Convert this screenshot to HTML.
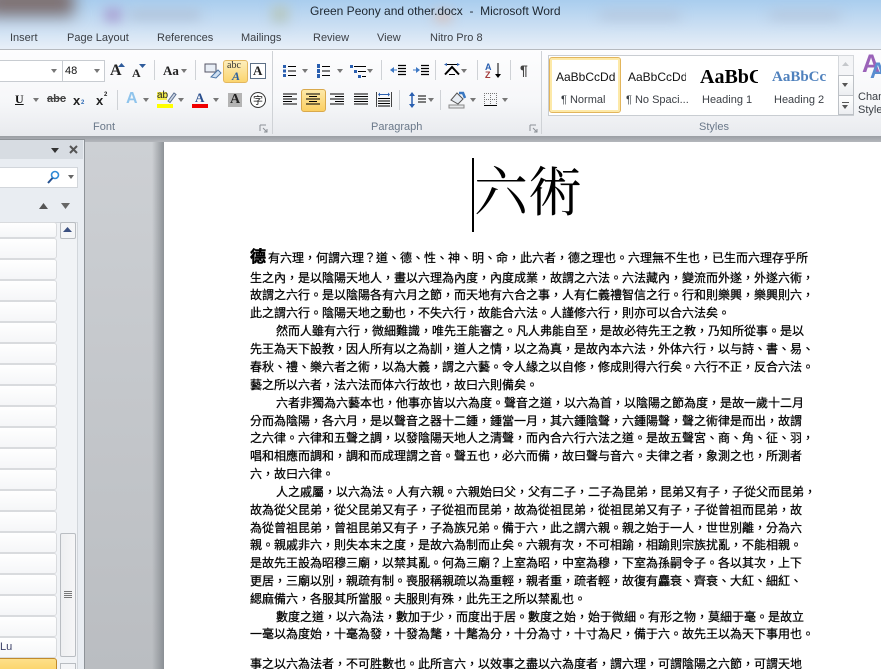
<!DOCTYPE html>
<html style="overflow:hidden;height:669px"><head><meta charset="utf-8"><style>
html,body{margin:0;padding:0}
body{width:881px;height:669px;overflow:hidden;background:#b9bcc1;font-family:"Liberation Sans",sans-serif;color:#222}
#w{position:absolute;left:0;top:0;width:881px;height:669px;overflow:hidden;contain:paint}
.a{position:absolute}
.t{position:absolute;white-space:nowrap;font-size:11px;color:#3c4046}
.dd{position:absolute;width:0;height:0;border-left:3.5px solid transparent;border-right:3.5px solid transparent;border-top:4px solid #777}
.sep{position:absolute;width:1px;background:#cfd2d6}
.blot{position:absolute;filter:blur(6px)}
.l{position:absolute;white-space:nowrap;font-family:"WenQuanYi Zen Hei","Noto Sans CJK TC",sans-serif;font-size:12px;line-height:18px;color:#000;left:250px;-webkit-text-stroke:.25px #000}
.it{position:absolute;left:-4px;width:59px;height:19px;background:linear-gradient(#fff,#f5f6f8);border:1px solid #d9dbde;border-radius:3px}
svg{position:absolute;overflow:visible}
</style></head><body><div id="w">
<!-- title bar -->
<div class="a" style="left:0;top:0;width:881px;height:50px;background:linear-gradient(#a9cdee,#c6dcf2 45%,#e9f0f8)"></div>
<div class="blot" style="left:-14px;top:-12px;width:88px;height:28px;background:#7d6f70;filter:blur(8px)"></div>
<div class="blot" style="left:105px;top:9px;width:16px;height:12px;background:#a596cc"></div>
<div class="blot" style="left:130px;top:12px;width:70px;height:6px;background:#a9b6cb"></div>
<div class="blot" style="left:272px;top:6px;width:16px;height:16px;background:#b6c6bd"></div>
<div class="blot" style="left:435px;top:12px;width:16px;height:9px;background:#dcbdb2"></div>
<div class="blot" style="left:600px;top:13px;width:80px;height:5px;background:#aebbd0"></div>
<div class="blot" style="left:770px;top:13px;width:70px;height:5px;background:#aebbd0"></div>
<div class="t" style="left:310px;top:4px;font-size:12px;color:#1e2730">Green Peony and other.docx &nbsp;-&nbsp; Microsoft Word</div>
<div class="t" style="left:10px;top:32px">Insert</div>
<div class="t" style="left:67px;top:32px">Page Layout</div>
<div class="t" style="left:157px;top:32px">References</div>
<div class="t" style="left:241px;top:32px">Mailings</div>
<div class="t" style="left:313px;top:32px">Review</div>
<div class="t" style="left:377px;top:32px">View</div>
<div class="t" style="left:430px;top:32px">Nitro Pro 8</div>
<!-- ribbon -->
<div class="a" style="left:0;top:49px;width:881px;height:86px;background:linear-gradient(#fdfdfe,#f6f7f9 60%,#e8eaee);border-top:1px solid #b6babf;border-bottom:1px solid #8f9398"></div>
<div class="a" style="left:0;top:136px;width:881px;height:6px;background:linear-gradient(#9a9ea3,#b4b7bc)"></div>
<div class="sep" style="left:272px;top:51px;height:83px"></div>
<div class="sep" style="left:541px;top:51px;height:83px"></div>
<div class="t" style="left:93px;top:121px;color:#6a7889">Font</div>
<div class="t" style="left:371px;top:121px;color:#6a7889">Paragraph</div>
<div class="t" style="left:699px;top:121px;color:#6a7889">Styles</div>
<svg style="left:259px;top:124px" width="9" height="9"><path d="M1 1h6M1 1v6M4 4l4 4M8 5v3H5" stroke="#8b9096" fill="none"/></svg>
<svg style="left:529px;top:124px" width="9" height="9"><path d="M1 1h6M1 1v6M4 4l4 4M8 5v3H5" stroke="#8b9096" fill="none"/></svg>
<!-- font row 1 -->
<div class="a" style="left:-2px;top:60px;width:63px;height:20px;background:#fff;border:1px solid #c8ccd1"></div>
<div class="a" style="left:62px;top:60px;width:41px;height:20px;background:#fff;border:1px solid #c8ccd1"></div>
<div class="dd" style="left:51px;top:69px"></div><div class="dd" style="left:94px;top:69px"></div>
<div class="t" style="left:65px;top:65px;color:#111">48</div>
<div class="t" style="left:110px;top:62px;font:bold 16px 'Liberation Serif',serif;color:#222">A</div>
<svg style="left:118px;top:63px" width="8" height="5"><path d="M0 4L3.500 0L7 4z" fill="#2f5c9c"/></svg>
<div class="t" style="left:132px;top:66px;font:bold 12px 'Liberation Serif',serif;color:#222">A</div>
<svg style="left:139px;top:64px" width="8" height="5"><path d="M0 0L3.500 4L7 0z" fill="#2f5c9c"/></svg>
<div class="sep" style="left:154px;top:60px;height:20px"></div>
<div class="t" style="left:163px;top:63px;font:bold 13px 'Liberation Serif',serif;color:#222">Aa</div>
<div class="dd" style="left:181px;top:69px"></div>
<div class="sep" style="left:195px;top:60px;height:20px"></div>
<svg style="left:204px;top:62px" width="18" height="18"><rect x="1" y="2" width="11" height="8" fill="#e8eef6" stroke="#556"/><path d="M7 15l7-7 3 3-5 5z" fill="#cfe0f2" stroke="#4d77a8"/></svg>
<div class="a" style="left:223px;top:60px;width:23px;height:21px;background:linear-gradient(#fdeebb,#fbd56f);border:1px solid #e3b75f;border-radius:3px"></div>
<div class="t" style="left:227px;top:60px;font:10px 'Liberation Serif',serif;color:#333">abc</div>
<div class="t" style="left:232px;top:69px;font:italic bold 12px 'Liberation Serif',serif;color:#2a5e9e">A</div>
<div class="a" style="left:250px;top:63px;width:14px;height:14px;border:1px solid #5c6f86;background:#fff"></div>
<div class="t" style="left:253px;top:63px;font:bold 13px 'Liberation Serif',serif;color:#222">A</div>
<!-- font row 2 -->
<div class="t" style="left:15px;top:92px;font:bold 12px 'Liberation Serif',serif;color:#111;text-decoration:underline">U</div>
<div class="dd" style="left:33px;top:98px"></div>
<div class="t" style="left:47px;top:93px;font:bold 11px 'Liberation Sans',sans-serif;color:#444;text-decoration:line-through">abc</div>
<div class="t" style="left:73px;top:93px;font:bold 13px 'Liberation Sans',sans-serif;color:#222">x</div><div class="t" style="left:81px;top:100px;font:bold 6px 'Liberation Sans',sans-serif;color:#2f6cb5">2</div>
<div class="t" style="left:96px;top:93px;font:bold 13px 'Liberation Sans',sans-serif;color:#222">x</div><div class="t" style="left:104px;top:92px;font:bold 6px 'Liberation Sans',sans-serif;color:#222">2</div>
<div class="sep" style="left:117px;top:90px;height:20px"></div>
<div class="t" style="left:126px;top:90px;font:bold 16px 'Liberation Sans',sans-serif;color:#8fc4ec">A</div>
<div class="dd" style="left:143px;top:98px"></div>
<div class="a" style="left:157px;top:92px;width:10px;height:8px;background:#f4ee50"></div>
<div class="t" style="left:157px;top:90px;font:10px 'Liberation Sans',sans-serif;color:#222">ab</div>
<svg style="left:167px;top:92px" width="9" height="11"><path d="M1 9l6-8 2 1.500-6 8z" fill="#cfd8e6" stroke="#5a6f90"/></svg>
<div class="a" style="left:157px;top:104px;width:16px;height:4px;background:#ffff00"></div>
<div class="dd" style="left:178px;top:98px"></div>
<div class="t" style="left:195px;top:90px;font:bold 13px 'Liberation Serif',serif;color:#2a4f8e">A</div>
<div class="a" style="left:192px;top:104px;width:16px;height:4px;background:#f00000"></div>
<div class="dd" style="left:213px;top:98px"></div>
<div class="a" style="left:228px;top:93px;width:14px;height:14px;background:#b4b4b4"></div>
<div class="t" style="left:230px;top:92px;font:bold 14px 'Liberation Serif',serif;color:#222">A</div>
<div class="a" style="left:250px;top:92px;width:14px;height:14px;border:1px solid #333;border-radius:50%;background:#fff;font:10px/14px 'Noto Sans CJK SC',sans-serif;text-align:center;color:#111">字</div>
<!-- paragraph row 1 -->
<svg style="left:283px;top:64px" width="14" height="14"><g fill="#2a5fb0"><rect x="0" y="1" width="3" height="3"/><rect x="0" y="5.500" width="3" height="3"/><rect x="0" y="10" width="3" height="3"/></g><path d="M5 2.500h8M5 7h8M5 11.500h8" stroke="#000"/></svg>
<div class="dd" style="left:302px;top:69px"></div>
<svg style="left:317px;top:64px" width="14" height="14"><g fill="#2a5fb0"><rect x="0" y="0" width="3" height="4"/><rect x="0" y="5" width="3" height="4"/><rect x="0" y="10" width="3" height="4"/></g><path d="M5 2.500h8M5 7h8M5 11.500h8" stroke="#000"/></svg>
<div class="dd" style="left:337px;top:69px"></div>
<svg style="left:350px;top:64px" width="17" height="15"><g fill="#2a5fb0"><rect x="0" y="1" width="3" height="3"/><rect x="4" y="6" width="3" height="3"/><rect x="8" y="11" width="3" height="3"/></g><path d="M4 2.500h12M8 7.500h8M12 12.500h4" stroke="#000"/></svg>
<div class="dd" style="left:367px;top:69px"></div>
<div class="sep" style="left:381px;top:60px;height:20px"></div>
<svg style="left:390px;top:64px" width="16" height="14"><path d="M8 1.500h8M8 4.500h8M8 7.500h8M8 10.500h8" stroke="#000" stroke-width="1.300"/><path d="M0 6l4-3v6z" fill="#3d78c4"/><path d="M3 6h4" stroke="#3d78c4"/></svg>
<svg style="left:413px;top:64px" width="16" height="14"><path d="M8 1.500h8M8 4.500h8M8 7.500h8M8 10.500h8" stroke="#000" stroke-width="1.300"/><path d="M7 6l-4-3v6z" fill="#3d78c4"/><path d="M0 6h4" stroke="#3d78c4"/></svg>
<div class="sep" style="left:435px;top:60px;height:20px"></div>
<svg style="left:444px;top:63px" width="16" height="13"><path d="M1 11.500L8 4l7 7.500" stroke="#000" stroke-width="2" fill="none"/><path d="M3 1.500h10M5 11.500h6" stroke="#000"/><path d="M0 1.500l3-1.500v3zM16 1.500l-3-1.500v3z" fill="#2a5fb0"/></svg>
<div class="dd" style="left:461px;top:69px"></div>
<div class="sep" style="left:477px;top:60px;height:20px"></div>
<div class="t" style="left:485px;top:62px;font:bold 9px 'Liberation Sans',sans-serif;color:#2a5fb0">A</div>
<div class="t" style="left:485px;top:70px;font:bold 9px 'Liberation Sans',sans-serif;color:#a23a3a">Z</div>
<svg style="left:495px;top:63px" width="6" height="16"><path d="M3 0v12" stroke="#000"/><path d="M0 11h6l-3 4z" fill="#000"/></svg>
<div class="sep" style="left:510px;top:60px;height:20px"></div>
<div class="t" style="left:520px;top:62px;font:bold 14px 'Liberation Sans',sans-serif;color:#444">¶</div>
<!-- paragraph row 2 -->
<svg style="left:283px;top:93px" width="14" height="12"><path d="M0 1h14M0 3.500h9M0 6h14M0 8.500h9M0 11h14" stroke="#000"/></svg>
<div class="a" style="left:301px;top:89px;width:23px;height:21px;background:linear-gradient(#fde9a8,#fbcf62);border:1px solid #d9a94c;border-radius:3px"></div>
<svg style="left:306px;top:93px" width="14" height="12"><path d="M0 1h14M3 3.500h8M0 6h14M3 8.500h8M0 11h14" stroke="#000"/></svg>
<svg style="left:330px;top:93px" width="14" height="12"><path d="M0 1h14M5 3.500h9M0 6h14M5 8.500h9M0 11h14" stroke="#000"/></svg>
<svg style="left:354px;top:93px" width="14" height="12"><path d="M0 1h14M0 3.500h14M0 6h14M0 8.500h14M0 11h14" stroke="#000"/></svg>
<svg style="left:376px;top:92px" width="16" height="15"><path d="M0.500 0v15M15.500 0v15" stroke="#444"/><path d="M3 2.500h10" stroke="#2a5fb0"/><path d="M2 2.500l2-2v4zM14 2.500l-2-2v4z" fill="#2a5fb0"/><path d="M2 6.500h12M2 9h12M2 11.500h12M2 14h12" stroke="#000"/></svg>
<div class="sep" style="left:399px;top:90px;height:20px"></div>
<svg style="left:409px;top:92px" width="17" height="16"><path d="M3 1v14" stroke="#2a5fb0" stroke-width="1.500"/><path d="M0 4l3-4 3 4zM0 12l3 4 3-4z" fill="#2a5fb0"/><path d="M9 4h8M9 7h8M9 10h8" stroke="#000"/></svg>
<div class="dd" style="left:428px;top:98px"></div>
<div class="sep" style="left:440px;top:90px;height:20px"></div>
<svg style="left:449px;top:91px" width="18" height="17"><path d="M2 9l6-7 6 6-5 5z" fill="#e8edf3" stroke="#555"/><path d="M10 2l4 0 2 5" stroke="#3a78c2" stroke-width="2.500" fill="none"/><rect x="0" y="14" width="15" height="3" fill="#e6e8ea" stroke="#888"/></svg>
<div class="dd" style="left:470px;top:98px"></div>
<svg style="left:484px;top:93px" width="13" height="13"><path d="M0 .5h13M0 6.500h13M6.500 0v12M.5 0v12M12.500 0v12" stroke="#777" stroke-dasharray="1 1"/><path d="M0 12.500h13" stroke="#000"/></svg>
<div class="dd" style="left:502px;top:98px"></div>
<!-- styles gallery -->
<div class="a" style="left:548px;top:55px;width:304px;height:59px;background:#fff;border:1px solid #c9cdd2"></div>
<div class="a" style="left:550px;top:58px;width:66px;height:50px;background:#fff;border:2px solid #fde9a8;outline:1px solid #e2b55c;border-radius:2px"></div>
<div class="t" style="left:556px;top:70px;width:59px;overflow:hidden;font-size:12px;color:#111">AaBbCcDdEe</div>
<div class="t" style="left:628px;top:70px;width:58px;overflow:hidden;font-size:12px;color:#111">AaBbCcDdEe</div>
<div class="t" style="left:700px;top:66px;width:58px;overflow:hidden;font:bold 20px 'Liberation Serif',serif;color:#000">AaBbCc</div>
<div class="t" style="left:772px;top:69px;width:58px;overflow:hidden;font:bold 15px 'Liberation Serif',serif;color:#4f81bd">AaBbCc</div>
<div class="t" style="left:561px;top:94px">¶ Normal</div>
<div class="t" style="left:626px;top:94px">¶ No Spaci...</div>
<div class="t" style="left:702px;top:94px">Heading 1</div>
<div class="t" style="left:774px;top:94px">Heading 2</div>
<div class="a" style="left:838px;top:55px;width:14px;height:19px;background:#f4f5f7;border:1px solid #d5d8dc"></div>
<div class="a" style="left:838px;top:75px;width:14px;height:19px;background:linear-gradient(#fff,#eceef1);border:1px solid #bdc1c6"></div>
<div class="a" style="left:838px;top:95px;width:14px;height:18px;background:linear-gradient(#fff,#eceef1);border:1px solid #bdc1c6"></div>
<svg style="left:842px;top:62px" width="7" height="5"><path d="M0 4L3.500 0 7 4z" fill="#c4c7cb"/></svg>
<div class="dd" style="left:842px;top:83px;border-top-color:#555"></div>
<div class="a" style="left:842px;top:102px;width:7px;height:1px;background:#555"></div><div class="dd" style="left:842px;top:105px;border-top-color:#555"></div>
<div class="t" style="left:862px;top:50px;font:bold 25px 'Liberation Sans',sans-serif;color:#9a62b8;letter-spacing:-4px">A</div>
<div class="t" style="left:870px;top:58px;font:bold 22px 'Liberation Sans',sans-serif;color:#5a8ed0">A</div>
<div class="t" style="left:858px;top:91px">Chan</div>
<div class="t" style="left:858px;top:104px">Style</div>
<!-- left pane -->
<div class="a" style="left:0;top:139px;width:84px;height:530px;background:#e9edf2;border-right:1px solid #8e9398;border-top:1px solid #8e9398"></div>
<div class="a" style="left:0;top:140px;width:83px;height:19px;background:#d7dce2"></div>
<div class="dd" style="left:51px;top:148px;border-left-width:4px;border-right-width:4px;border-top:5px solid #333"></div>
<svg style="left:69px;top:145px" width="9" height="9"><path d="M1 1l7 7M8 1l-7 7" stroke="#555" stroke-width="2"/></svg>
<div class="a" style="left:-2px;top:167px;width:78px;height:19px;background:#fff;border:1px solid #d2d6db"></div>
<svg style="left:47px;top:170px" width="13" height="14"><circle cx="8" cy="5" r="3.500" fill="none" stroke="#2f8ad6" stroke-width="1.600"/><path d="M5.500 8L1 13" stroke="#24508f" stroke-width="2"/></svg>
<div class="dd" style="left:68px;top:175px;border-top-color:#666"></div>
<svg style="left:39px;top:203px" width="9" height="6"><path d="M0 6L4.500 0 9 6z" fill="#555"/></svg>
<svg style="left:61px;top:203px" width="9" height="6"><path d="M0 0L4.500 6 9 0z" fill="#666"/></svg>
<div class="a" style="left:-2px;top:222px;width:78px;height:447px;background:#f1f3f6;border:1px solid #d2d6db"></div>
<div class="it" style="top:222px;height:14px"></div>
<div class="it" style="top:238px"></div><div class="it" style="top:259px"></div><div class="it" style="top:280px"></div>
<div class="it" style="top:301px"></div><div class="it" style="top:322px"></div><div class="it" style="top:343px"></div>
<div class="it" style="top:364px"></div><div class="it" style="top:385px"></div><div class="it" style="top:406px"></div>
<div class="it" style="top:427px"></div><div class="it" style="top:448px"></div><div class="it" style="top:469px"></div>
<div class="it" style="top:490px"></div><div class="it" style="top:511px"></div><div class="it" style="top:532px"></div>
<div class="it" style="top:553px"></div><div class="it" style="top:574px"></div><div class="it" style="top:595px"></div>
<div class="it" style="top:616px"></div><div class="it" style="top:637px"></div>
<div class="t" style="left:0;top:641px;color:#3a3f66">Lu</div>
<div class="a" style="left:-4px;top:658px;width:59px;height:12px;background:linear-gradient(#fde08a,#fcd368);border:1px solid #c08a2c;border-radius:3px"></div>
<div class="a" style="left:60px;top:222px;width:14px;height:15px;background:#f4f5f7;border:1px solid #b9bdc2;border-radius:2px"></div>
<svg style="left:63px;top:227px" width="9" height="6"><path d="M0 5L4.500 0 9 5z" fill="#3a4f80"/></svg>
<div class="a" style="left:60px;top:533px;width:14px;height:122px;background:linear-gradient(90deg,#eeeff1,#f6f6f7);border:1px solid #b9bdc2;border-radius:2px"></div>
<svg style="left:64px;top:591px" width="8" height="8"><path d="M0 .5h8M0 2.500h8M0 4.500h8M0 6.500h8" stroke="#777"/></svg>
<div class="a" style="left:60px;top:663px;width:14px;height:10px;background:#f4f5f7;border:1px solid #b9bdc2"></div>
<!-- workspace + page -->
<div class="a" style="left:85px;top:140px;width:79px;height:529px;background:linear-gradient(#cdd0d4,#babdc1)"></div>
<div class="a" style="left:152px;top:140px;width:12px;height:529px;background:linear-gradient(90deg,rgba(130,135,140,0),rgba(130,135,140,.85))"></div>
<div class="a" style="left:85px;top:136px;width:796px;height:6px;background:linear-gradient(#9a9ea3,#b4b7bc)"></div>
<div class="a" style="left:164px;top:142px;width:717px;height:527px;background:#fff"></div>
<div class="a" style="left:472px;top:158px;width:2px;height:74px;background:#000"></div>
<div class="a" style="left:474px;top:157px;font:400 54px/64px 'Noto Serif CJK SC',serif;color:#000;white-space:nowrap">六術</div>
<div class="l" style="top:246px;font-size:16px;font-weight:bold;line-height:18px;-webkit-text-stroke:.5px #000">德</div>
<div class="l" style="top:249px;left:268px">有六理，何謂六理？道、德、性、神、明、命，此六者，德之理也。六理無不生也，已生而六理存乎所</div>
<div class="l" style="top:269px">生之內，是以陰陽天地人，畫以六理為內度，內度成業，故謂之六法。六法藏內，變流而外遂，外遂六術，</div>
<div class="l" style="top:286px">故謂之六行。是以陰陽各有六月之節，而天地有六合之事，人有仁義禮智信之行。行和則樂興，樂興則六，</div>
<div class="l" style="top:304px">此之謂六行。陰陽天地之動也，不失六行，故能合六法。人謹修六行，則亦可以合六法矣。</div>
<div class="l" style="top:322px;left:276px">然而人雖有六行，微細難識，唯先王能審之。凡人弗能自至，是故必待先王之教，乃知所從事。是以</div>
<div class="l" style="top:340px">先王為天下設教，因人所有以之為訓，道人之情，以之為真，是故內本六法，外体六行，以与詩、書、易、</div>
<div class="l" style="top:358px">春秋、禮、樂六者之術，以為大義，謂之六藝。令人緣之以自修，修成則得六行矣。六行不正，反合六法。</div>
<div class="l" style="top:376px">藝之所以六者，法六法而体六行故也，故曰六則備矣。</div>
<div class="l" style="top:394px;left:276px">六者非獨為六藝本也，他事亦皆以六為度。聲音之道，以六為首，以陰陽之節為度，是故一歲十二月</div>
<div class="l" style="top:412px">分而為陰陽，各六月，是以聲音之器十二鍾，鍾當一月，其六鍾陰聲，六鍾陽聲，聲之術律是而出，故謂</div>
<div class="l" style="top:429px">之六律。六律和五聲之調，以發陰陽天地人之清聲，而內合六行六法之道。是故五聲宮、商、角、征、羽，</div>
<div class="l" style="top:447px">唱和相應而調和，調和而成理謂之音。聲五也，必六而備，故曰聲与音六。夫律之者，象測之也，所測者</div>
<div class="l" style="top:465px">六，故曰六律。</div>
<div class="l" style="top:483px;left:276px">人之戚屬，以六為法。人有六親。六親始曰父，父有二子，二子為昆弟，昆弟又有子，子從父而昆弟，</div>
<div class="l" style="top:501px">故為從父昆弟，從父昆弟又有子，子從祖而昆弟，故為從祖昆弟，從祖昆弟又有子，子從曾祖而昆弟，故</div>
<div class="l" style="top:519px">為從曾祖昆弟，曾祖昆弟又有子，子為族兄弟。備于六，此之謂六親。親之始于一人，世世別離，分為六</div>
<div class="l" style="top:536px">親。親戚非六，則失本末之度，是故六為制而止矣。六親有次，不可相踰，相踰則宗族扰亂，不能相親。</div>
<div class="l" style="top:554px">是故先王設為昭穆三廟，以禁其亂。何為三廟？上室為昭，中室為穆，下室為孫嗣令子。各以其次，上下</div>
<div class="l" style="top:572px">更居，三廟以別，親疏有制。喪服稱親疏以為重輕，親者重，疏者輕，故復有麤衰、齊衰、大紅、細紅、</div>
<div class="l" style="top:590px">緦麻備六，各服其所當服。夫服則有殊，此先王之所以禁亂也。</div>
<div class="l" style="top:608px;left:276px">數度之道，以六為法，數加于少，而度出于居。數度之始，始于微細。有形之物，莫細于毫。是故立</div>
<div class="l" style="top:625px">一毫以為度始，十毫為發，十發為氂，十氂為分，十分為寸，十寸為尺，備于六。故先王以為天下事用也。</div>
<div class="l" style="top:655px">事之以六為法者，不可胜數也。此所言六，以效事之盡以六為度者，謂六理，可謂陰陽之六節，可謂天地</div>
</div></body></html>
